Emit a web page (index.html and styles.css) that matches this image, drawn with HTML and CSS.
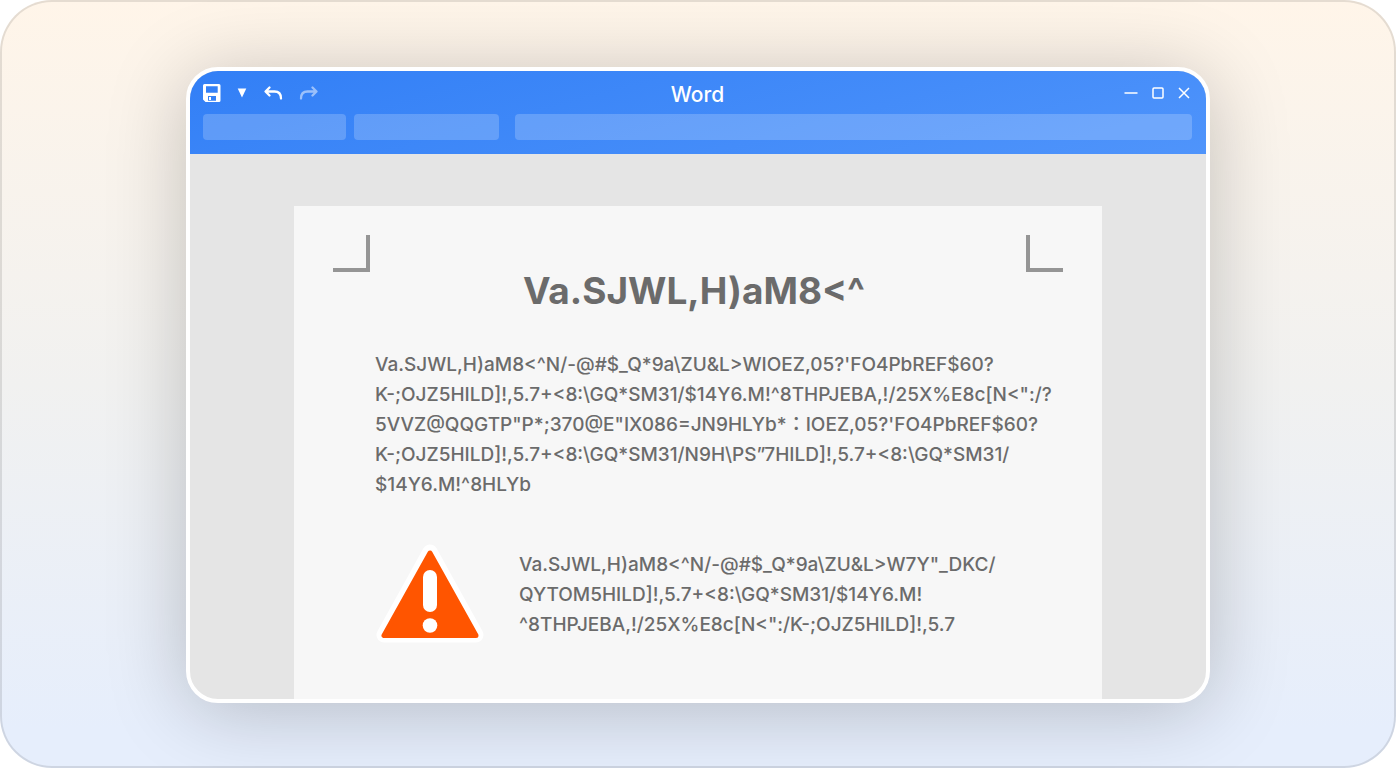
FILE: index.html
```html
<!DOCTYPE html>
<html lang="en">
<head>
<meta charset="utf-8">
<title>Word</title>
<link rel="stylesheet" href="styles.css">
</head>
<body>
<main class="stage">
  <section class="window">
    <header class="toolbar">
      <div class="titlebar">
        <div class="actions">
          <button class="icon-button" aria-label="Save">
            <svg width="18" height="18" viewBox="0 0 18 18"><path fill="#fff" fill-rule="evenodd" d="M1.500 0H16a1.500 1.500 0 0 1 1.500 1.500V16.500A1.500 1.500 0 0 1 16 18H2.500L0 15.500V1.500A1.500 1.500 0 0 1 1.500 0ZM3 2.200V8.700H14.700V2.200ZM5 12V16.800H13V12Z"/><path fill="#fff" d="M6 13h2v3H6z"/></svg>
          </button>
          <button class="icon-button" aria-label="More options">
            <svg width="10" height="10" viewBox="0 0 10 10"><path fill="#fff" d="M.7.500H9.300L5 9.500Z"/></svg>
          </button>
          <button class="icon-button" aria-label="Undo">
            <svg width="20" height="16" viewBox="0 0 20 16"><path class="stroke" d="M6.500 2.500 2.500 6.500 6.500 10.500M3 6.500H11.500Q18 6.500 18 13.500"/></svg>
          </button>
          <button class="icon-button faded" aria-label="Redo">
            <svg width="20" height="16" viewBox="0 0 20 16"><path class="stroke" d="M13.500 2.500 17.500 6.500 13.500 10.500M17 6.500H8.500Q2 6.500 2 13.500"/></svg>
          </button>
        </div>
        <h1 class="app-name">Word</h1>
        <div class="controls">
          <button class="icon-button" aria-label="Minimize">
            <svg width="14" height="12" viewBox="0 0 14 12"><path class="thin" d="M.5 6H13.500"/></svg>
          </button>
          <button class="icon-button" aria-label="Maximize">
            <svg width="12" height="12" viewBox="0 0 12 12"><rect class="thin" x="1" y="1" width="10" height="10" rx="1"/></svg>
          </button>
          <button class="icon-button" aria-label="Close">
            <svg width="12" height="12" viewBox="0 0 12 12"><path class="thin" d="M1 1 11 11M11 1 1 11"/></svg>
          </button>
        </div>
      </div>
      <div class="ribbon">
        <div class="slot"></div>
        <div class="slot"></div>
        <div class="slot slot-wide"></div>
      </div>
    </header>
    <div class="workspace">
      <article class="sheet">
        <div class="marks">
          <span class="mark mark-left"></span>
          <span class="mark mark-right"></span>
        </div>
        <h2 class="heading">Va.SJWL,H)aM8&lt;^</h2>
        <p class="text">Va.SJWL,H)aM8&lt;^N/-@#$_Q*9a\ZU&amp;L&gt;WIOEZ,05?'FO4PbREF$60?<br>K-;OJZ5HILD]!,5.7+&lt;8:\GQ*SM31/$14Y6.M!^8THPJEBA,!/25X%E8c[N&lt;":/?<br>5VVZ@QQGTP"P*;370@E"IX086=JN9HLYb*：IOEZ,05?'FO4PbREF$60?<br>K-;OJZ5HILD]!,5.7+&lt;8:\GQ*SM31/N9H\PS”7HILD]!,5.7+&lt;8:\GQ*SM31/<br>$14Y6.M!^8HLYb</p>
        <div class="notice">
          <svg class="warning" width="110" height="102" viewBox="0 0 110 102"><path d="M55 8 9 91H101Z" fill="#fff" stroke="#fff" stroke-width="15" stroke-linejoin="round"/><path d="M55 9 9 91.500H101Z" fill="#ff5500" stroke="#ff5500" stroke-width="5" stroke-linejoin="round"/><rect x="48" y="26" width="14" height="42" rx="7" fill="#fff"/><circle cx="55" cy="81.500" r="7.300" fill="#fff"/></svg>
          <p class="text">Va.SJWL,H)aM8&lt;^N/-@#$_Q*9a\ZU&amp;L&gt;W7Y"_DKC/<br>QYTOM5HILD]!,5.7+&lt;8:\GQ*SM31/$14Y6.M!<br>^8THPJEBA,!/25X%E8c[N&lt;":/K-;OJZ5HILD]!,5.7</p>
        </div>
      </article>
    </div>
  </section>
</main>
</body>
</html>
```
FILE: styles.css
```css
* {
  box-sizing: border-box;
}

body {
  margin: 0;
  background: #fff;
  font-family: Inter, "Noto Sans CJK TC", sans-serif;
}

h1, h2, p {
  margin: 0;
}

.stage {
  display: flex;
  min-height: 100vh;
  padding: 67px 186px 65px;
  border-radius: 52px;
  background: linear-gradient(#fff5e9, #f1f1f0 50%, #e6eefc 95%);
  box-shadow: inset 0 0 0 2px rgba(0, 0, 0, 0.1);
}

.window {
  flex: 1;
  display: flex;
  flex-direction: column;
  overflow: hidden;
  border: 4px solid #fff;
  border-radius: 32px;
  background: #e5e5e5;
  box-shadow: 0 8px 80px rgba(0, 0, 0, 0.22);
}

.toolbar {
  padding: 0 14px 14px 13px;
  background: linear-gradient(165deg, #327ff6, #4f94fb);
}

.titlebar {
  display: grid;
  grid-template-columns: 1fr auto 1fr;
  align-items: center;
  height: 43px;
}

.actions,
.controls {
  display: flex;
  align-items: center;
  gap: 15px;
}

.actions {
  gap: 16px;
}

.controls {
  justify-content: flex-end;
  gap: 14px;
  padding-right: 2px;
}

.icon-button {
  display: flex;
  padding: 0;
  border: 0;
  background: none;
}

.faded {
  opacity: 0.5;
}

.stroke {
  fill: none;
  stroke: #fff;
  stroke-width: 2.300;
  stroke-linecap: round;
  stroke-linejoin: round;
}

.thin {
  fill: none;
  stroke: #fff;
  stroke-width: 1.500;
}

.app-name {
  padding-top: 4px;
  color: #fff;
  font-size: 21px;
  font-weight: 500;
  line-height: 24px;
}

.ribbon {
  display: grid;
  grid-template-columns: 143px 145px 1fr;
  column-gap: 8px;
}

.slot {
  height: 26px;
  border-radius: 4px;
  background: rgba(255, 255, 255, 0.2);
}

.slot-wide {
  margin-left: 8px;
}

.workspace {
  flex: 1;
  display: flex;
  padding: 52px 104px 0;
}

.sheet {
  flex: 1;
  padding: 29px 39px 0;
  background: #f7f7f7;
}

.marks {
  display: flex;
  justify-content: space-between;
}

.mark {
  width: 37px;
  height: 37px;
  border: 0 solid #959595;
  border-bottom-width: 4px;
}

.mark-left {
  border-right-width: 4px;
}

.mark-right {
  border-left-width: 4px;
}

.heading {
  padding-right: 8px;
  color: #6b6b6b;
  font-size: 37px;
  font-weight: 700;
  line-height: 38px;
  text-align: center;
}

.text {
  color: #6b6b6b;
  font-size: 19px;
  font-weight: 500;
  line-height: 30px;
  white-space: nowrap;
}

.heading + .text {
  margin: 40px 0 0 42px;
}

.notice {
  display: flex;
  align-items: center;
  gap: 34px;
  margin: 44px 0 0 42px;
}
```
